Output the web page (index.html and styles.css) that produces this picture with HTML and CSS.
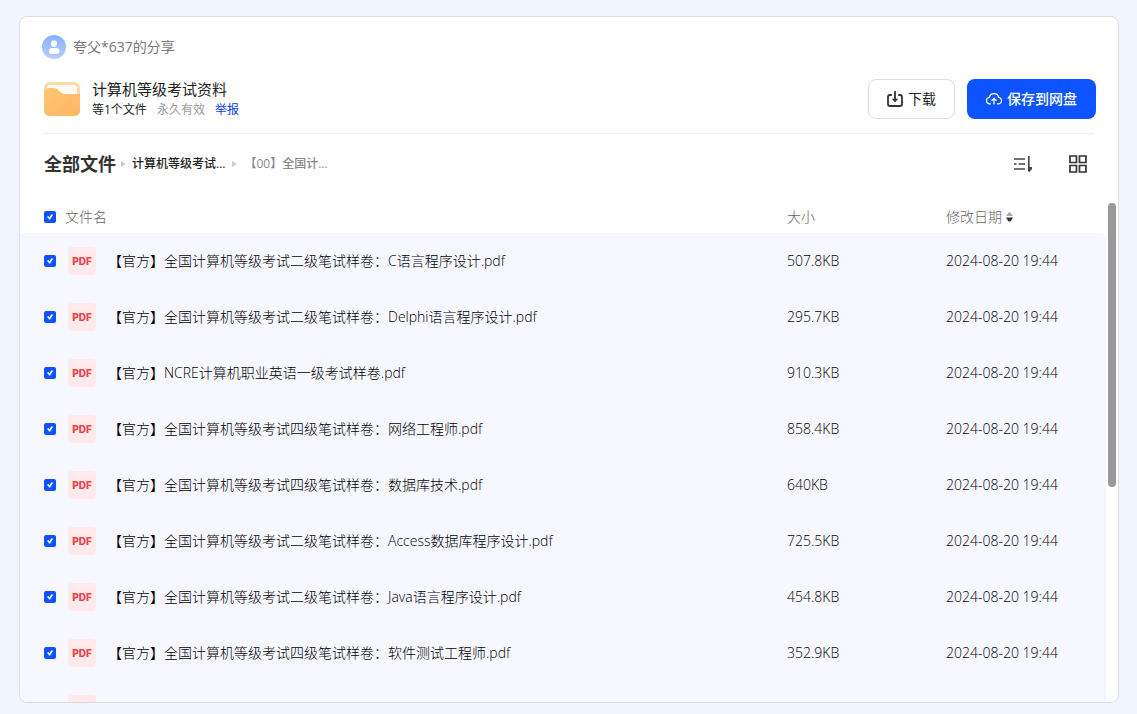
FILE: index.html
```html
<!DOCTYPE html>
<html lang="zh-CN">
<head>
<meta charset="utf-8">
<title>计算机等级考试资料</title>
<link rel="stylesheet" href="styles.css">
</head>
<body>
<main class="card">
  <header class="head">
    <div class="sharer">
      <svg class="avatar" viewBox="0 0 24 24" aria-hidden="true">
        <defs><linearGradient id="av" x1="0" y1="0" x2="0" y2="1"><stop offset="0" stop-color="#85b0fb"/><stop offset="1" stop-color="#bccdfb"/></linearGradient></defs>
        <circle cx="12" cy="12" r="12" fill="url(#av)"/>
        <ellipse cx="12" cy="8.6" rx="3" ry="3.4" fill="#fff"/>
        <rect x="7" y="13" width="10.400" height="6" rx="3" fill="#fff"/>
      </svg>
      <span>夸父*637的分享</span>
    </div>
    <div class="share">
      <svg class="folder" viewBox="0 0 36 34" aria-hidden="true">
        <defs><linearGradient id="fo" x1="0" y1="0" x2="1" y2="1"><stop offset="0" stop-color="#ffc673"/><stop offset="1" stop-color="#fdb663"/></linearGradient></defs>
        <rect width="36" height="34" rx="6" fill="#ffd9a6"/>
        <rect x="3" y="3" width="30" height="16" rx="3" fill="#fffaf3"/>
        <path d="M0 11Q0 6 5 6H10Q12 6 13.500 7.500L17 10.500Q18.500 12 21 12H36V28Q36 34 30 34H6Q0 34 0 28Z" fill="url(#fo)"/>
      </svg>
      <div class="info">
        <h1 class="title">计算机等级考试资料</h1>
        <p class="meta"><span>等1个文件</span><span class="valid">永久有效</span><a class="report" href="#">举报</a></p>
      </div>
      <div class="actions">
        <button class="btn" type="button">
          <svg class="icon-down" viewBox="0 0 16 16" fill="none" stroke="#333" stroke-width="1.800" aria-hidden="true"><path d="M4.800 4H3Q1 4 1 6V13Q1 15 3 15H13Q15 15 15 13V6Q15 4 13 4H11.200M8 0V10"/><path d="M4.800 7.800H11.200L8 11.500Z" fill="#333" stroke="none"/></svg>
          下载
        </button>
        <button class="btn primary" type="button">
          <svg class="icon-cloud" viewBox="0 0 16 14" fill="none" stroke="#fff" stroke-width="1.300" aria-hidden="true"><path d="M5 11.800H4A3.200 3.200 0 0 1 3.300 5.400A4.800 4.800 0 0 1 12.700 5.400A3.200 3.200 0 0 1 12 11.800H11M8 12.500V6.500M5.500 8.800L8 6.300L10.500 8.800"/></svg>
          保存到网盘
        </button>
      </div>
    </div>
  </header>

  <div class="bar">
    <nav class="crumbs">
      <a class="root" href="#">全部文件</a>
      <svg class="sep" viewBox="0 0 5 6" aria-hidden="true"><path d="M0 0L5 3L0 6Z" fill="#ccc"/></svg>
      <a class="parent" href="#">计算机等级考试...</a>
      <svg class="sep" viewBox="0 0 5 6" aria-hidden="true"><path d="M0 0L5 3L0 6Z" fill="#ccc"/></svg>
      <span class="current">【00】全国计...</span>
    </nav>
    <div class="tools">
      <button class="tool" type="button" aria-label="排序">
        <svg width="20" height="18" viewBox="0 0 20 18" fill="none" stroke="#444" stroke-width="1.700" aria-hidden="true"><path d="M1 4H12M1 9H3.500M5.500 9H12M1 14H12M15.800 1V16"/><path d="M15.500 12H19V14L16.500 17H15.500Z" fill="#444" stroke="none"/></svg>
      </button>
      <button class="tool" type="button" aria-label="网格视图">
        <svg width="18" height="18" viewBox="0 0 18 18" fill="none" stroke="#333" stroke-width="1.700" aria-hidden="true"><path d="M1 1H7.500V7.500H1ZM10.500 1H17V7.500H10.500ZM1 10.500H7.500V17H1ZM10.500 10.500H17V17H10.500Z"/></svg>
      </button>
    </div>
  </div>

  <section class="list">
    <table class="files">
      <thead>
        <tr>
          <th><label class="pick"><input class="check" type="checkbox" checked>文件名</label></th>
          <th class="size">大小</th>
          <th class="date"><button class="sort" type="button">修改日期<svg width="7" height="10" viewBox="0 0 7 10" aria-hidden="true"><path d="M0 4L2.500 0.500H4.500L7 4Z" fill="#aaa"/><path d="M0 5.500H7L4.500 9.500H2.500Z" fill="#333"/></svg></button></th>
        </tr>
      </thead>
      <tbody>
        <tr><td><label class="file"><input class="check" type="checkbox" checked><span class="pdf">PDF</span>【官方】全国计算机等级考试二级笔试样卷：C语言程序设计.pdf</label></td><td>507.8KB</td><td>2024-08-20 19:44</td></tr>
        <tr><td><label class="file"><input class="check" type="checkbox" checked><span class="pdf">PDF</span>【官方】全国计算机等级考试二级笔试样卷：Delphi语言程序设计.pdf</label></td><td>295.7KB</td><td>2024-08-20 19:44</td></tr>
        <tr><td><label class="file"><input class="check" type="checkbox" checked><span class="pdf">PDF</span>【官方】NCRE计算机职业英语一级考试样卷.pdf</label></td><td>910.3KB</td><td>2024-08-20 19:44</td></tr>
        <tr><td><label class="file"><input class="check" type="checkbox" checked><span class="pdf">PDF</span>【官方】全国计算机等级考试四级笔试样卷：网络工程师.pdf</label></td><td>858.4KB</td><td>2024-08-20 19:44</td></tr>
        <tr><td><label class="file"><input class="check" type="checkbox" checked><span class="pdf">PDF</span>【官方】全国计算机等级考试四级笔试样卷：数据库技术.pdf</label></td><td>640KB</td><td>2024-08-20 19:44</td></tr>
        <tr><td><label class="file"><input class="check" type="checkbox" checked><span class="pdf">PDF</span>【官方】全国计算机等级考试二级笔试样卷：Access数据库程序设计.pdf</label></td><td>725.5KB</td><td>2024-08-20 19:44</td></tr>
        <tr><td><label class="file"><input class="check" type="checkbox" checked><span class="pdf">PDF</span>【官方】全国计算机等级考试二级笔试样卷：Java语言程序设计.pdf</label></td><td>454.8KB</td><td>2024-08-20 19:44</td></tr>
        <tr><td><label class="file"><input class="check" type="checkbox" checked><span class="pdf">PDF</span>【官方】全国计算机等级考试四级笔试样卷：软件测试工程师.pdf</label></td><td>352.9KB</td><td>2024-08-20 19:44</td></tr>
        <tr><td><span class="file partial"><span class="pdf"></span></span></td><td></td><td></td></tr>
      </tbody>
    </table>
    <div class="track"><div class="thumb"></div></div>
  </section>
</main>
</body>
</html>
```

FILE: styles.css
```css
* { box-sizing: border-box; }

body {
  margin: 0;
  height: 100vh;
  padding: 16px 18px 11px 19px;
  background: #f1f5ff;
  color: #222;
  font: 14px/20px "Open Sans", "Noto Sans CJK SC", sans-serif;
}

button {
  border: 0;
  padding: 0;
  background: none;
  color: inherit;
  font: inherit;
  cursor: pointer;
}

a { color: inherit; text-decoration: none; }
svg { display: block; flex: none; }

.card {
  height: 100%;
  display: flex;
  flex-direction: column;
  overflow: hidden;
  background: #fff;
  border: 1px solid #dcdde3;
  border-radius: 8px;
}

.head {
  margin: 0 24px;
  padding: 18px 0 13px;
  border-bottom: 1px solid #ededed;
}

.sharer {
  display: flex;
  align-items: center;
  gap: 7px;
  margin-left: -2px;
  color: #777;
}
.avatar { width: 24px; height: 24px; }

.share {
  display: flex;
  align-items: center;
  margin: 19px -2px 0 0;
}
.folder { width: 36px; height: 34px; }
.info { flex: 1; margin-left: 12px; }
.title { margin: 0; font-size: 15px; line-height: 22px; font-weight: 400; }
.meta { display: flex; gap: 10px; margin: 0; font-size: 12px; line-height: 20px; }
.valid { color: #999; }
.report { color: #0b3bf0; }

.actions { display: flex; gap: 12px; }
.btn {
  display: flex;
  align-items: center;
  gap: 5px;
  height: 40px;
  padding: 0 18px;
  border: 1px solid #dedede;
  border-radius: 8px;
}
.primary {
  padding: 0 19px;
  border: 0;
  background: #0d53ff;
  color: #fff;
  font-weight: 500;
}
.icon-down { width: 16px; height: 16px; }
.icon-cloud { width: 16px; height: 14px; }

.bar {
  display: flex;
  align-items: center;
  justify-content: space-between;
  height: 60px;
  padding: 0 31px 0 24px;
}
.crumbs { display: flex; align-items: center; font-size: 12px; font-weight: 500; }
.root { font-size: 18px; line-height: 24px; font-weight: 600; color: #333; }
.sep { width: 5px; height: 6px; margin: 0 6px 0 5px; }
.parent { margin-right: 2px; }
.current { margin-left: 1px; color: #888; }
.tools { display: flex; gap: 36px; }

.list {
  display: flex;
  flex: 1;
  min-height: 0;
  overflow: hidden;
  padding-top: 7px;
}

.files {
  flex: 1;
  align-self: flex-start;
  table-layout: fixed;
  border-collapse: collapse;
  font-weight: 300;
  color: #000;
}
.files th { height: 32px; padding: 0; text-align: left; font-weight: 300; color: #666; }
.files td { height: 56px; padding: 0; background: #f7f7ff; }
.files tbody tr:first-child td:last-child { border-top-right-radius: 6px; }
.size { width: 159px; }
.date { width: 160px; }

.pick, .file { display: flex; align-items: center; padding-left: 24px; }
.pick { gap: 9px; }
.file { gap: 12px; }
.partial { padding-left: 48px; }

.check {
  appearance: none;
  flex: none;
  width: 12px;
  height: 12px;
  margin: 0;
  border-radius: 2px;
  background: #0d53ff;
  display: grid;
  place-items: center;
}
.check:checked::before {
  content: "";
  width: 6px;
  height: 6px;
  background: #fff;
  clip-path: polygon(0 50%, 18% 32%, 42% 55%, 78% 0, 100% 15%, 46% 100%);
}

.pdf {
  display: grid;
  place-items: center;
  flex: none;
  width: 28px;
  height: 28px;
  border-radius: 4px;
  background: #ffe9ea;
  color: #f0414f;
  font: 800 10px/12px Inter, sans-serif;
}

.sort { display: flex; align-items: center; gap: 4px; }

.track { width: 12px; padding: 2px 2px 0; }
.thumb { height: 57%; border-radius: 4px; background: #999; }
```
